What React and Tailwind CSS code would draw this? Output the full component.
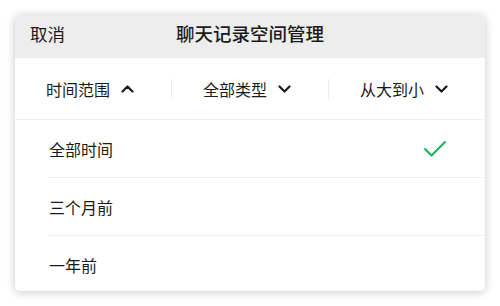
import React from "react";

const font = { fontFamily: '"Noto Sans CJK SC", "Noto Sans", sans-serif' };

function Chevron({ up }) {
  return (
    <svg width="13" height="8" viewBox="0 0 13 8" className="ml-[11px]">
      <path
        d={up ? "M1.5 6.5 L6.5 1.5 L11.5 6.5" : "M1.5 1.5 L6.5 6.5 L11.5 1.5"}
        fill="none"
        stroke="#1a1a1a"
        strokeWidth="2.2"
        strokeLinecap="round"
        strokeLinejoin="round"
      />
    </svg>
  );
}

export default function App() {
  const filters = [
    { label: "时间范围", up: true },
    { label: "全部类型", up: false },
    { label: "从大到小", up: false },
  ];
  const options = [
    { label: "全部时间", checked: true },
    { label: "三个月前", checked: false },
    { label: "一年前", checked: false },
  ];

  return (
    <div className="w-[500px] h-[306px] bg-white p-[15px]" style={font}>
      <div className="w-[470px] h-[276px] bg-white rounded-[5px] overflow-hidden shadow-[0_1px_10px_rgba(0,0,0,0.22)] flex flex-col">
        {/* Header */}
        <div className="h-[43px] shrink-0 bg-[#ededed] grid grid-cols-[1fr_auto_1fr] items-center pb-[5px]">
          <span className="pl-[15px] text-[17.5px] text-[#1a1a1a]">取消</span>
          <span className="text-[18.5px] font-medium text-[#1a1a1a]">聊天记录空间管理</span>
          <span />
        </div>

        {/* Filters */}
        <div className="h-[62px] shrink-0 flex items-center border-b border-[#f0f0f0] pt-px">
          {filters.map((f, i) => (
            <React.Fragment key={f.label}>
              {i > 0 && <div className="w-px h-[20px] bg-[#ececec]" />}
              <div className="flex-1 flex items-center justify-center text-[16px] text-[#1a1a1a] pr-[6px]">
                <span>{f.label}</span>
                <Chevron up={f.up} />
              </div>
            </React.Fragment>
          ))}
        </div>

        {/* Options */}
        <div className="flex-1 overflow-hidden pl-[33px]">
          {options.map((o) => (
            <div
              key={o.label}
              className="h-[58px] flex items-center justify-between border-b border-[#f0f0f0] pr-[38px]"
            >
              <span className="pl-px text-[16px] text-[#1a1a1a]">{o.label}</span>
              {o.checked && (
                <svg width="24" height="18" viewBox="0 0 24 18">
                  <path
                    d="M2 9 L8.5 15.5 L22 2"
                    fill="none"
                    stroke="#1fb15a"
                    strokeWidth="2"
                    strokeLinecap="round"
                    strokeLinejoin="round"
                  />
                </svg>
              )}
            </div>
          ))}
        </div>
      </div>
    </div>
  );
}
